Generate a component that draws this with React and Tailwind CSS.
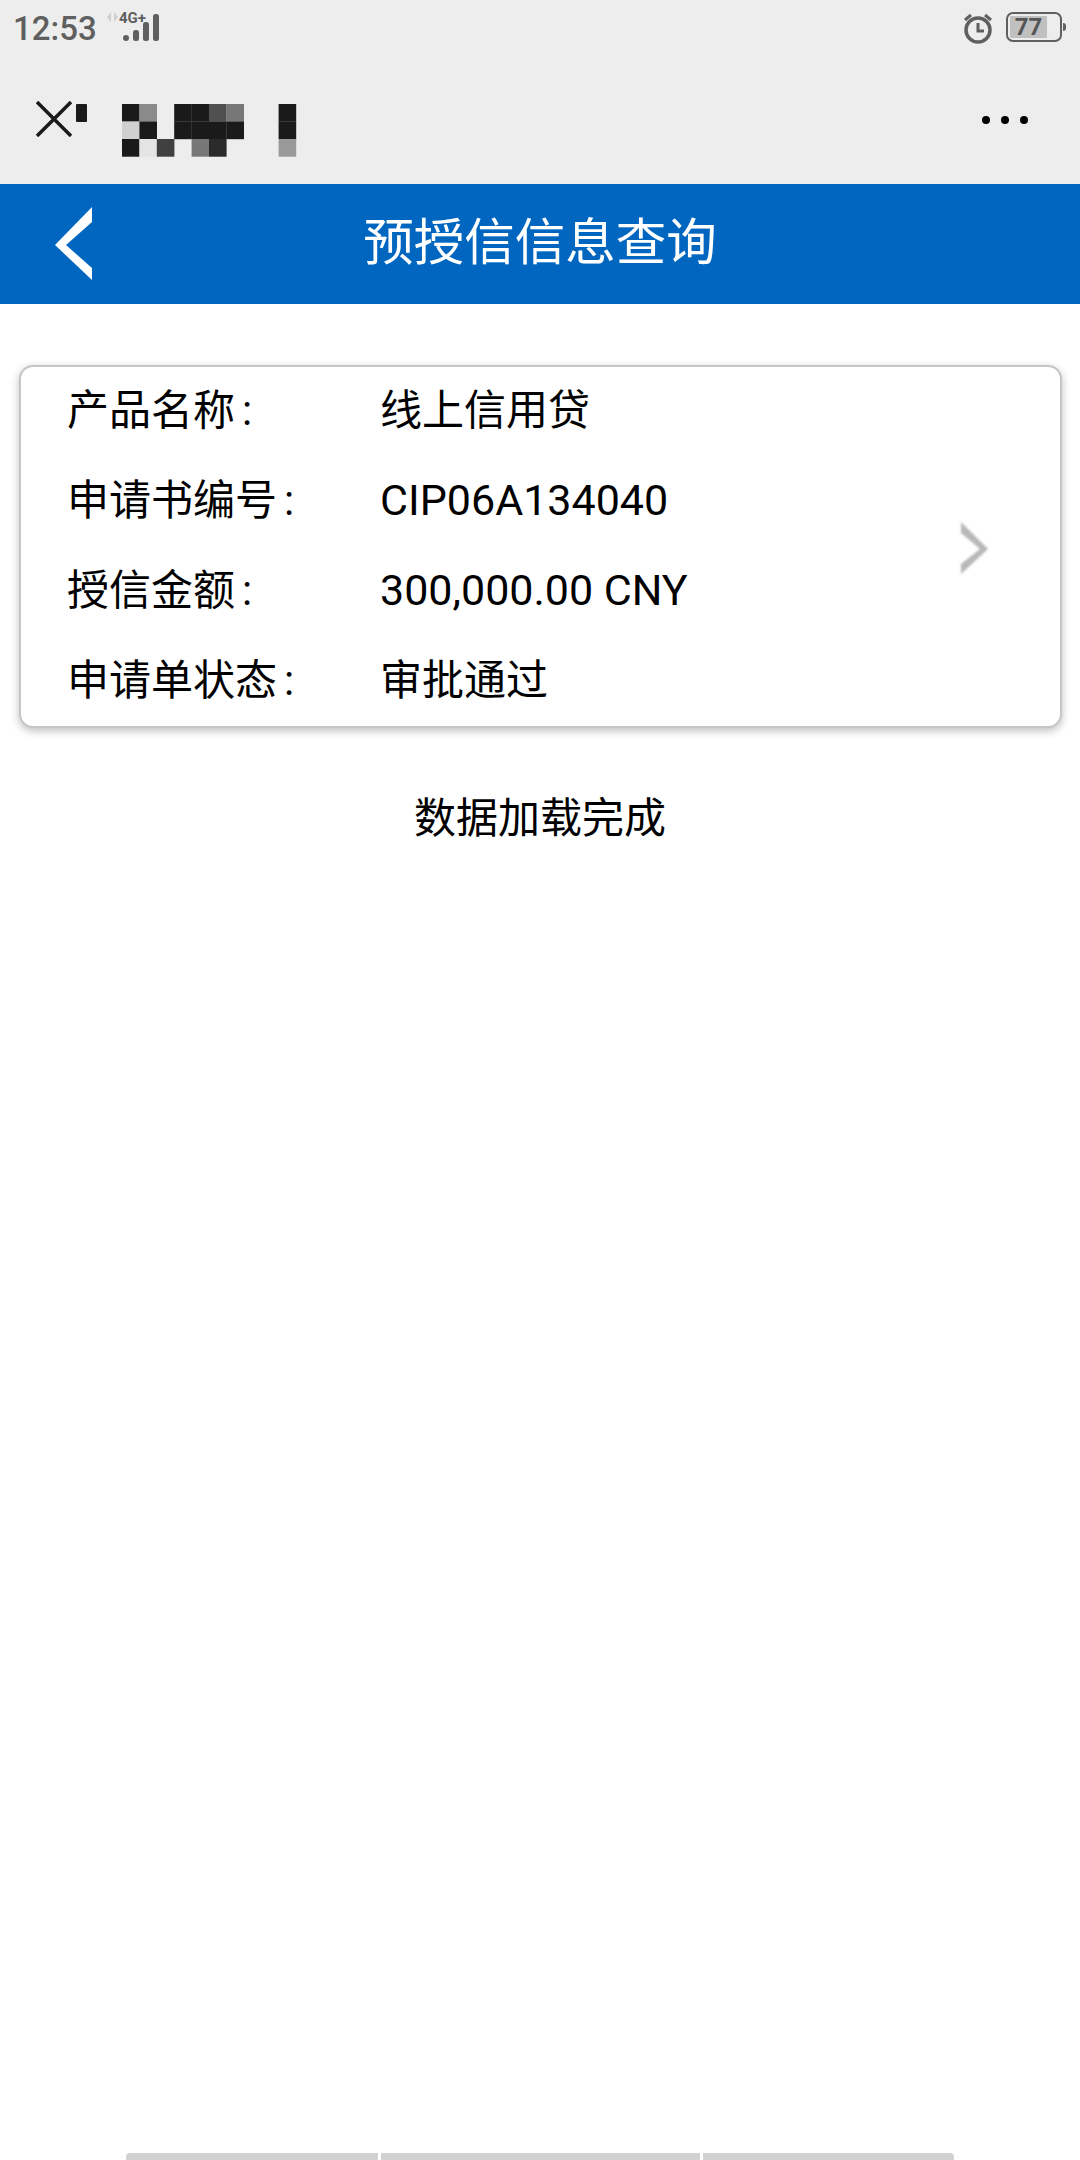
const rows = [
  ["产品名称", "线上信用贷", false],
  ["申请书编号", "CIP06A134040", true],
  ["授信金额", "300,000.00 CNY", true],
  ["申请单状态", "审批通过", false],
];

// mosaic over the page title: [col, row, colour]
const mosaic = [
  [0, 0, "#1a1a1a"], [1, 0, "#8a8a8a"], [3, 0, "#1a1a1a"], [4, 0, "#1a1a1a"], [5, 0, "#505050"], [6, 0, "#777777"], [9, 0, "#1a1a1a"],
  [0, 1, "#d0d0d0"], [1, 1, "#1a1a1a"], [3, 1, "#1a1a1a"], [4, 1, "#1a1a1a"], [5, 1, "#1a1a1a"], [6, 1, "#1a1a1a"], [9, 1, "#1a1a1a"],
  [0, 2, "#1a1a1a"], [1, 2, "#e4e4e4"], [2, 2, "#404040"], [4, 2, "#777777"], [5, 2, "#2a2a2a"], [9, 2, "#999999"],
];

function StatusBar() {
  return (
    <div className="h-[56px] flex items-center justify-between pl-[13px] pr-[14px] text-[#5f5f5f]">
      <div className="flex items-center">
        <span className="text-[33px] leading-none font-medium">12:53</span>
        <svg width="60" height="34" viewBox="0 0 60 34" className="ml-[9px] -mt-[8px]">
          <path d="M5 5v10L1 10zM8 5v10l4-5z" fill="#cfcfcf" />
          <text x="13" y="16" fontSize="15" fontWeight="700" fill="#5f5f5f" fontFamily="Roboto, sans-serif">4G+</text>
          <rect x="17" y="28" width="6" height="6" rx="3" fill="#5f5f5f" />
          <rect x="27" y="23" width="6" height="11" rx="2.5" fill="#5f5f5f" />
          <rect x="37" y="15" width="6" height="19" rx="2.5" fill="#5f5f5f" />
          <rect x="47" y="7" width="6" height="27" rx="2.5" fill="#5f5f5f" />
        </svg>
      </div>
      <div className="flex items-center gap-[12px]">
        <svg width="32" height="32" viewBox="0 0 32 32">
          <circle cx="16" cy="18" r="12" fill="none" stroke="#5f5f5f" strokeWidth="3.5" />
          <path d="M16 11v8h6" fill="none" stroke="#5f5f5f" strokeWidth="3" />
          <path d="M3 8l6-5M29 8l-6-5" fill="none" stroke="#5f5f5f" strokeWidth="3" />
        </svg>
        <div className="flex items-center gap-[1px] -mt-[2px]">
          <div className="w-[56px] h-[30px] border-[2px] border-[#5f5f5f] rounded-[7px] p-[2px] flex">
            <div className="w-[37px] bg-[#c0c0c0] flex items-center justify-center text-[24px] leading-none font-bold text-[#555555]">
              77
            </div>
          </div>
          <div className="w-[3px] h-[8px] bg-[#5f5f5f] rounded-r-sm" />
        </div>
      </div>
    </div>
  );
}

function WechatBar() {
  return (
    <div className="h-[128px] flex items-start justify-between pt-[45px] pl-[36px] pr-[52px]">
      <div className="flex items-start">
        <svg width="36" height="36" viewBox="0 0 36 36">
          <path d="M1 1l34 34M35 1L1 35" stroke="#1a1a1a" strokeWidth="3.5" fill="none" />
        </svg>
        {/* blurred-out title */}
        <svg width="280" height="54" viewBox="0 0 280 54" className="ml-[4px] mt-[3px]">
          <rect x="0" y="0" width="11" height="18" rx="1" fill="#1a1a1a" />
          {mosaic.map(([c, r, fill]) => (
            <rect key={`${c}-${r}`} x={46 + c * 17.4} y={r * 17.5} width="17.6" height="17.7" fill={fill} />
          ))}
        </svg>
      </div>
      <div className="flex gap-[11px] mt-[15px]">
        <div className="w-[8px] h-[8px] rounded-full bg-black" />
        <div className="w-[8px] h-[8px] rounded-full bg-black" />
        <div className="w-[8px] h-[8px] rounded-full bg-black" />
      </div>
    </div>
  );
}

function TitleBar() {
  return (
    <div className="relative h-[120px] bg-[#0066c0] flex items-center justify-center">
      <svg width="50" height="84" viewBox="0 0 50 84" className="absolute left-[50px] top-[18px] blur-[0.6px]">
        <path d="M42 5L5 43l37 35V66L16 43 42 20z" fill="white" />
      </svg>
      <h1 className="text-[50.5px] leading-none font-normal text-white -mt-[2px]">预授信信息查询</h1>
    </div>
  );
}

function InfoCard() {
  return (
    <div className="relative ml-[19px] w-[1043px] mt-[61px] h-[363px] bg-white rounded-[14px] border-[2px] border-[#c6c6c6] shadow-[0_3px_8px_rgba(0,0,0,0.25)] pl-[46px]">
      {rows.map(([label, value, latin]) => (
        <div key={label} className="h-[90px] pb-[4px] flex items-center text-[42px] text-black">
          <span className="w-[313px] shrink-0">
            {label}
            <span className="ml-[7px]">:</span>
          </span>
          <span className={latin ? "text-[43px]" : ""}>{value}</span>
        </div>
      ))}
      <svg width="32" height="56" viewBox="0 0 32 56" className="absolute right-[71px] top-[155px] blur-[1px]">
        <path d="M4 0l27 27L4 52V42l19-15L4 11z" fill="#b8b8b8" />
      </svg>
    </div>
  );
}

export default function App() {
  return (
    <div
      className="w-[1080px] h-[2160px] flex flex-col bg-white overflow-hidden"
      style={{ fontFamily: 'Roboto, "Noto Sans CJK SC", sans-serif' }}
    >
      <div className="bg-[#ededed]">
        <StatusBar />
        <WechatBar />
      </div>
      <TitleBar />
      <InfoCard />
      <p className="mt-[63px] text-center text-[42px] leading-[56px] text-black">数据加载完成</p>
      <div className="mt-auto mx-[126px] flex gap-[3px]">
        <div className="w-[252px] h-[7px] bg-[#d2d2d2] rounded-tl-sm" />
        <div className="w-[319px] h-[7px] bg-[#d2d2d2]" />
        <div className="flex-1 h-[7px] bg-[#d2d2d2] rounded-tr-sm" />
      </div>
    </div>
  );
}
